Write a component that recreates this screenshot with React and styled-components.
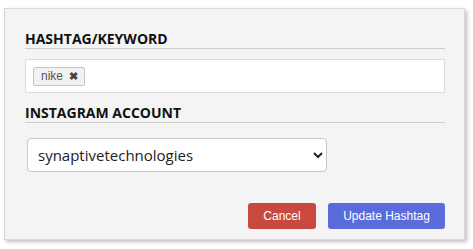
import React from "react";
import styled, { createGlobalStyle } from "styled-components";

const Global = createGlobalStyle`
  html, body { margin: 0; padding: 0; background: #fff; }
  body { font-family: "Open Sans", "Liberation Sans", sans-serif; }
`;

const Page = styled.div`
  padding: 8px 8px 9px 4px;
`;

const Panel = styled.div`
  box-sizing: border-box;
  width: 461px;
  height: 232px;
  background: #f4f4f4;
  border: 1px solid #d8d8d8;
  box-shadow: 2px 2px 4px rgba(0, 0, 0, 0.25);
  padding: 23px 19px 0 20px;
  display: flex;
  flex-direction: column;
`;

const Heading = styled.div`
  font-family: "Open Sans", sans-serif;
  font-weight: 700;
  font-size: 14px;
  color: #111;
  line-height: 14px;
  padding-bottom: 2px;
  border-bottom: 1px solid #cdcdcd;
  margin-bottom: ${(p) => p.$gap || 10}px;
`;

const TagBox = styled.div`
  box-sizing: border-box;
  height: 34px;
  background: #fff;
  border: 1px solid #dcdcdc;
  border-radius: 2px;
  padding: 6px 7px;
  display: flex;
  align-items: center;
  margin-bottom: 13px;
`;

const Tag = styled.span`
  box-sizing: border-box;
  height: 19px;
  display: inline-flex;
  align-items: center;
  gap: 6px;
  padding: 0 6px 0 7px;
  background: #f2f2f2;
  border: 1px solid #c4c4c4;
  border-radius: 2px;
  font-family: "Liberation Sans", Arial, sans-serif;
  font-size: 12px;
  color: #555;
`;

const Remove = styled.span`
  font-size: 11px;
  font-weight: 700;
  color: #444;
`;

const Select = styled.select`
  box-sizing: border-box;
  width: 300px;
  height: 34px;
  margin-left: 2px;
  padding: 0 6px;
  font-family: "Open Sans", sans-serif;
  font-size: 15px;
  color: #222;
  background: #fff;
  border: 1px solid #c8c8c8;
  border-radius: 4px;
`;

const Actions = styled.div`
  display: flex;
  justify-content: flex-end;
  gap: 12px;
  margin-top: 31px;
`;

const Button = styled.button`
  box-sizing: border-box;
  height: 26px;
  border: none;
  border-radius: 3px;
  padding: 0;
  width: ${(p) => p.$w}px;
  background: ${(p) => p.$bg};
  color: #fff;
  font-family: "Liberation Sans", Arial, sans-serif;
  font-size: 12px;
`;

export default function App() {
  return (
    <Page>
      <Global />
      <Panel>
        <Heading>HASHTAG/KEYWORD</Heading>
        <TagBox>
          <Tag>
            nike <Remove>✖</Remove>
          </Tag>
        </TagBox>
        <Heading $gap={15}>INSTAGRAM ACCOUNT</Heading>
        <Select defaultValue="synaptivetechnologies">
          <option>synaptivetechnologies</option>
        </Select>
        <Actions>
          <Button $w={68} $bg="#c9483f">Cancel</Button>
          <Button $w={117} $bg="#5a6bdc">Update Hashtag</Button>
        </Actions>
      </Panel>
    </Page>
  );
}
